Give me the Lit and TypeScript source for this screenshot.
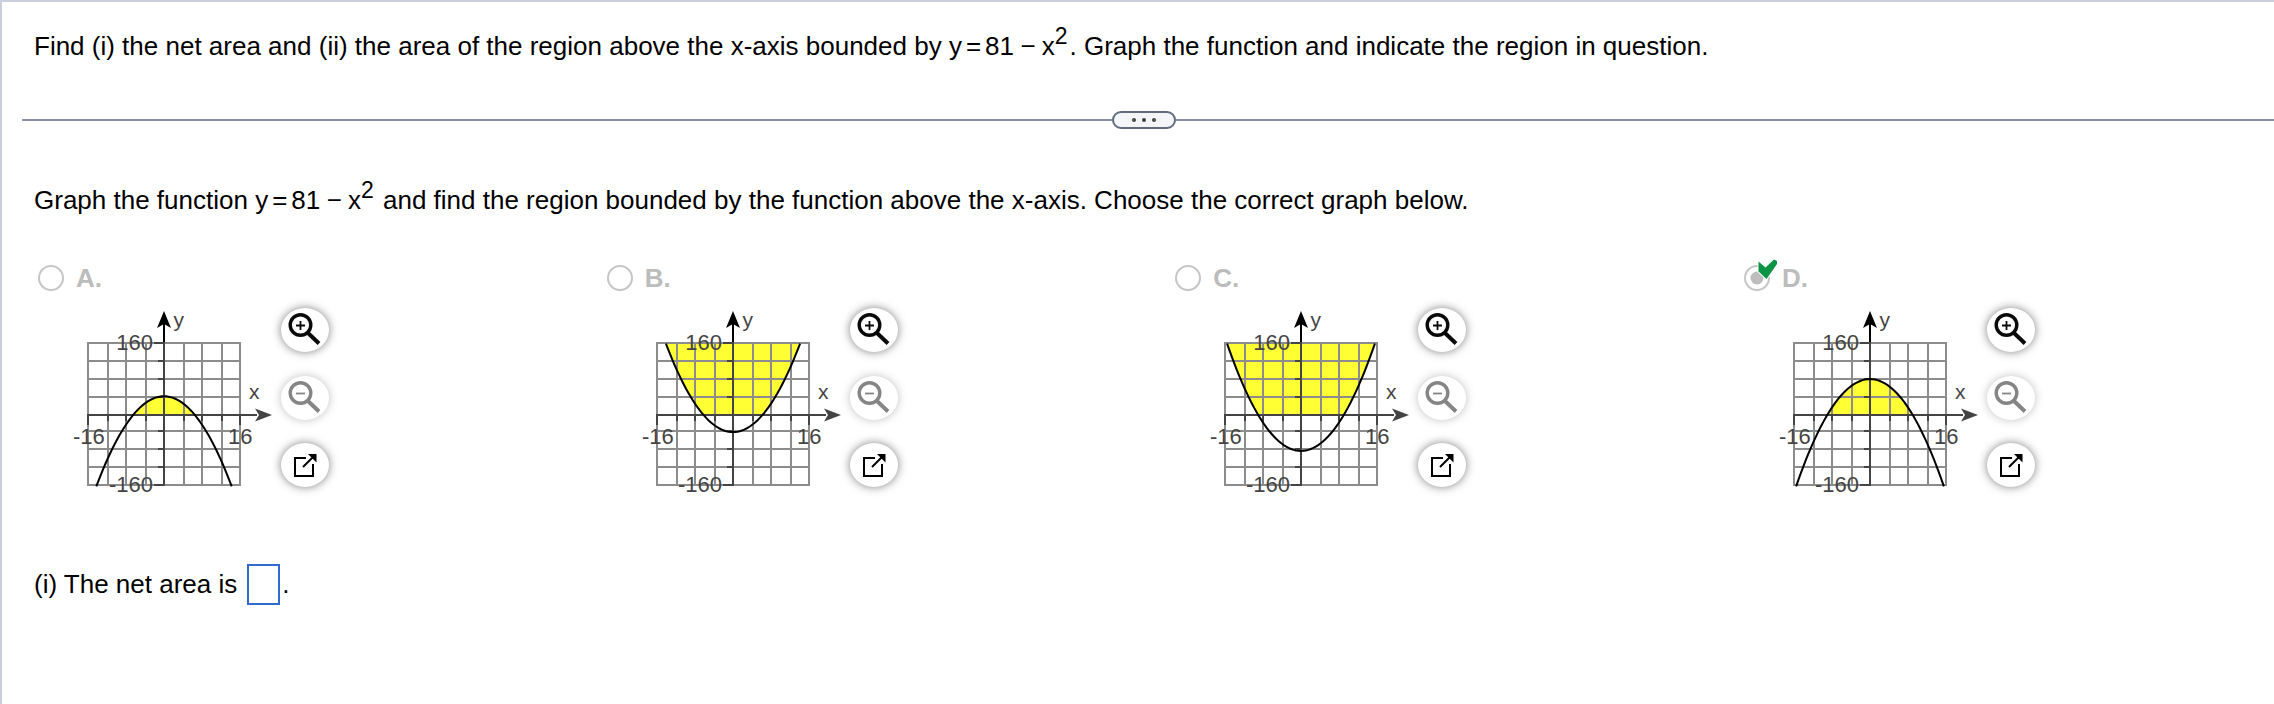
import { LitElement, html, svg, css } from "lit";
import { customElement, property } from "lit/decorators.js";

const COLS = [0, 20, 38, 58, 76, 96, 114, 134, 152];
const ROWS = [0, 18, 36, 54, 72, 88, 106, 124, 142];
const OX = 37;
const OY = 53;

interface Choice {
  letter: string;
  root: number;
  up: boolean;
  checked?: boolean;
}

const CHOICES: Choice[] = [
  { letter: "A", root: 6.5, up: false },
  { letter: "B", root: 6.2, up: true },
  { letter: "C", root: 9, up: true },
  { letter: "D", root: 9, up: false, checked: true },
];

@customElement("choice-graph")
class ChoiceGraph extends LitElement {
  @property({ type: Number }) root = 9;
  @property({ type: Boolean }) up = false;

  static styles = css`
    :host { display: block; width: 222px; height: 210px; }
    svg { display: block; }
    text { font-family: "Liberation Sans", Arial, sans-serif; font-size: 22px; fill: #444; }
    .name { font-size: 21px; }
    .grid { stroke: #8c8c8c; stroke-width: 2; }
    .axis { stroke: #444; stroke-width: 2; }
    .region { fill: #ffff33; }
    .curve { fill: none; stroke: #000; stroke-width: 2; }
  `;

  private points(limit: number): string {
    const cx = OX + 76;
    const cy = OY + 72;
    const k = 71 / 160;
    const s = this.up ? 1 : -1;
    const pts: string[] = [];
    for (let i = 0; i <= 60; i++) {
      const x = -limit + (2 * limit * i) / 60;
      const y = s * (x * x - this.root * this.root);
      pts.push(`${(cx + x * 4.75).toFixed(2)},${(cy - y * k).toFixed(2)}`);
    }
    return pts.join(" ");
  }

  private region(): string {
    const cx = OX + 76;
    const cy = OY + 72;
    const r = this.root;
    if (!this.up) return this.points(r);
    const edge = Math.sqrt(160 + r * r);
    const pts: string[] = [];
    for (let i = 0; i <= 30; i++) {
      const x = -edge + ((edge - r) * i) / 30;
      pts.push(`${cx + x * 4.75},${cy - ((x * x - r * r) * 71) / 160}`);
    }
    for (let i = 0; i <= 30; i++) {
      const x = r + ((edge - r) * i) / 30;
      pts.push(`${cx + x * 4.75},${cy - ((x * x - r * r) * 71) / 160}`);
    }
    return pts.join(" ");
  }

  render() {
    const edge = Math.sqrt(161 + this.root * this.root);
    return html`<svg width="222" height="210" viewBox="0 2 222 210">
      <polygon class="region" points=${this.region()}></polygon>
      ${COLS.map((x) => svg`<line class="grid" x1=${OX + x} x2=${OX + x} y1=${OY - 1} y2=${OY + 143}/>`)}
      ${ROWS.map((y) => svg`<line class="grid" x1=${OX} x2=${OX + 152} y1=${OY + y} y2=${OY + y}/>`)}
      <line class="axis" x1="36" x2="206" y1="125" y2="125"/>
      <line class="axis" x1="113" x2="113" y1="32" y2="196"/>
      ${COLS.map((x) => svg`<line class="axis" x1=${OX + x} x2=${OX + x} y1="125" y2=${x % 152 ? 131 : 135}/>`)}
      ${ROWS.map((y) => svg`<line class="axis" x1=${y % 142 ? 107 : 103} x2="113" y1=${OY + y} y2=${OY + y}/>`)}
      <polyline class="curve" points=${this.points(edge)}></polyline>
      <line x1="113" x2="113" y1="32" y2="52" stroke="#000" stroke-width="2"/>
      <path d="M113 21L120 38L113 34L106 38Z" fill="#000"/>
      <path d="M221 125L204 118.500L208 125L204 131.500Z" fill="#444"/>
      <text class="name" x="122.500" y="36.500">y</text>
      <text class="name" x="198" y="109">x</text>
      <text x="102" y="60" text-anchor="end">160</text>
      <text x="102" y="202" text-anchor="end">-160</text>
      <text x="22" y="154">-16</text>
      <text x="177" y="154">16</text>
    </svg>`;
  }
}

@customElement("tool-button")
class ToolButton extends LitElement {
  @property() kind = "in";

  static styles = css`
    :host { display: block; width: 48px; height: 44px; }
    .btn { width: 48px; height: 44px; border-radius: 50%; background: #fff; box-shadow: 0 0 10px rgba(0, 0, 0, 0.5); }
    .out { box-shadow: 0 0 10px rgba(0, 0, 0, 0.25); }
    svg { display: block; }
  `;

  render() {
    const c = this.kind === "out" ? "#858585" : "#0a0a0a";
    const glyph =
      this.kind === "open"
        ? svg`<path d="M25 15H14V33H32V21" fill="none" stroke="#000" stroke-width="2"/>
            <path d="M22 24L32 14" stroke="#000" stroke-width="2"/>
            <path d="M27 11H35.500V19.500Z" fill="#000"/>`
        : svg`<circle cx="19.500" cy="17" r="10.300" fill="none" stroke=${c} stroke-width="3.400"/>
            <path d="M27 25L38 35.500" stroke=${c} stroke-width="4"/>
            <path d=${this.kind === "in" ? "M15 17.500H24M19.500 13V22" : "M15 17.500H24"} stroke=${c} stroke-width="1.800"/>`;
    return html`<div class="btn ${this.kind}"><svg width="48" height="44" viewBox="0 0 48 44">${glyph}</svg></div>`;
  }
}

@customElement("app-root")
class AppRoot extends LitElement {
  static styles = css`
    :host {
      display: block; box-sizing: border-box; height: 704px; overflow: hidden;
      border-top: 2px solid #cacfde; border-left: 2px solid #cacfde; background: #fff;
      font-family: "Liberation Sans", Arial, sans-serif; font-size: 26px; line-height: 30px; color: #000;
    }
    .line { height: 30px; white-space: nowrap; padding-left: 32px; display: flex; }
    .first { margin-top: 29px; }
    .eq { display: inline-flex; }
    .op { margin: 0 4px; }
    .minus { margin: 0 6px 0 6.5px; }
    .sup { font-size: 23px; line-height: 30px; height: 30px; margin: -10px 2px 0 0; }
    .divider { display: flex; align-items: center; height: 18px; margin: 50px 0 0 20px; }
    .rule { height: 2px; background: #8592a6; }
    .left { width: 1090px; }
    .right { flex: 1; }
    .pill {
      box-sizing: border-box; width: 64px; height: 18px; border: 2px solid #5f6c7e; border-radius: 9px;
      background: #f3f5f6; display: flex; align-items: center; justify-content: center; gap: 6px;
    }
    .dot { width: 4px; height: 4px; border-radius: 50%; background: #444; }
    .second { margin-top: 56px; }
    .choices { display: grid; grid-template-columns: repeat(4, 568.67px); margin-top: 49px; }
    .choice { height: 238px; }
    .head { display: flex; height: 28px; align-items: center; padding-left: 36px; font-weight: bold; color: #bcbcbc; }
    .radio { display: block; margin-right: 12px; overflow: visible; }
    .body { display: flex; padding-left: 49px; }
    .tools { display: flex; flex-direction: column; padding-top: 16px; gap: 23.5px; margin-left: 8px; }
    .answer { margin-top: 62px; height: 41px; line-height: 41px; }
    .box { box-sizing: border-box; width: 33px; height: 41px; border: 2px solid #2f6bcd; margin: 0 2px 0 10px; }
  `;

  private equation() {
    return html`<span class="eq">y<span class="op">=</span>81<span class="minus">−</span>x<span class="sup">2</span></span>`;
  }

  private radio(checked = false) {
    return html`<svg class="radio" width="26" height="26" viewBox="0 0 26 26">
      <circle cx="13" cy="13" r="12" fill="#fff" stroke="#c6c6c6" stroke-width="2"/>
      ${checked
        ? svg`<circle cx="13" cy="13" r="6.500" fill="#bdbdbd"/>
            <path d="M14.500 -3.500L21.500 2.500L30 -5.500L33 -4V-1L22.500 14L14.500 6.500Z" fill="#0b9444" stroke="#fff" stroke-width="2" paint-order="stroke"/>`
        : ""}
    </svg>`;
  }

  render() {
    return html`
      <div class="line first"><span>Find (i) the net area and (ii) the area of the region above the x-axis bounded by&nbsp;</span>${this.equation()}<span>. Graph the function and indicate the region in question.</span></div>
      <div class="divider"><div class="rule left"></div><div class="pill"><i class="dot"></i><i class="dot"></i><i class="dot"></i></div><div class="rule right"></div></div>
      <div class="line second"><span>Graph the function&nbsp;</span>${this.equation()}<span>&nbsp;and find the region bounded by the function above the x-axis. Choose the correct graph below.</span></div>
      <div class="choices">
        ${CHOICES.map(
          (c) => html`<div class="choice">
            <div class="head">${this.radio(c.checked)}<span>${c.letter}.</span></div>
            <div class="body">
              <choice-graph .root=${c.root} .up=${c.up}></choice-graph>
              <div class="tools"><tool-button kind="in"></tool-button><tool-button kind="out"></tool-button><tool-button kind="open"></tool-button></div>
            </div>
          </div>`
        )}
      </div>
      <div class="line answer"><span>(i) The net area is</span><span class="box"></span><span>.</span></div>
    `;
  }
}
